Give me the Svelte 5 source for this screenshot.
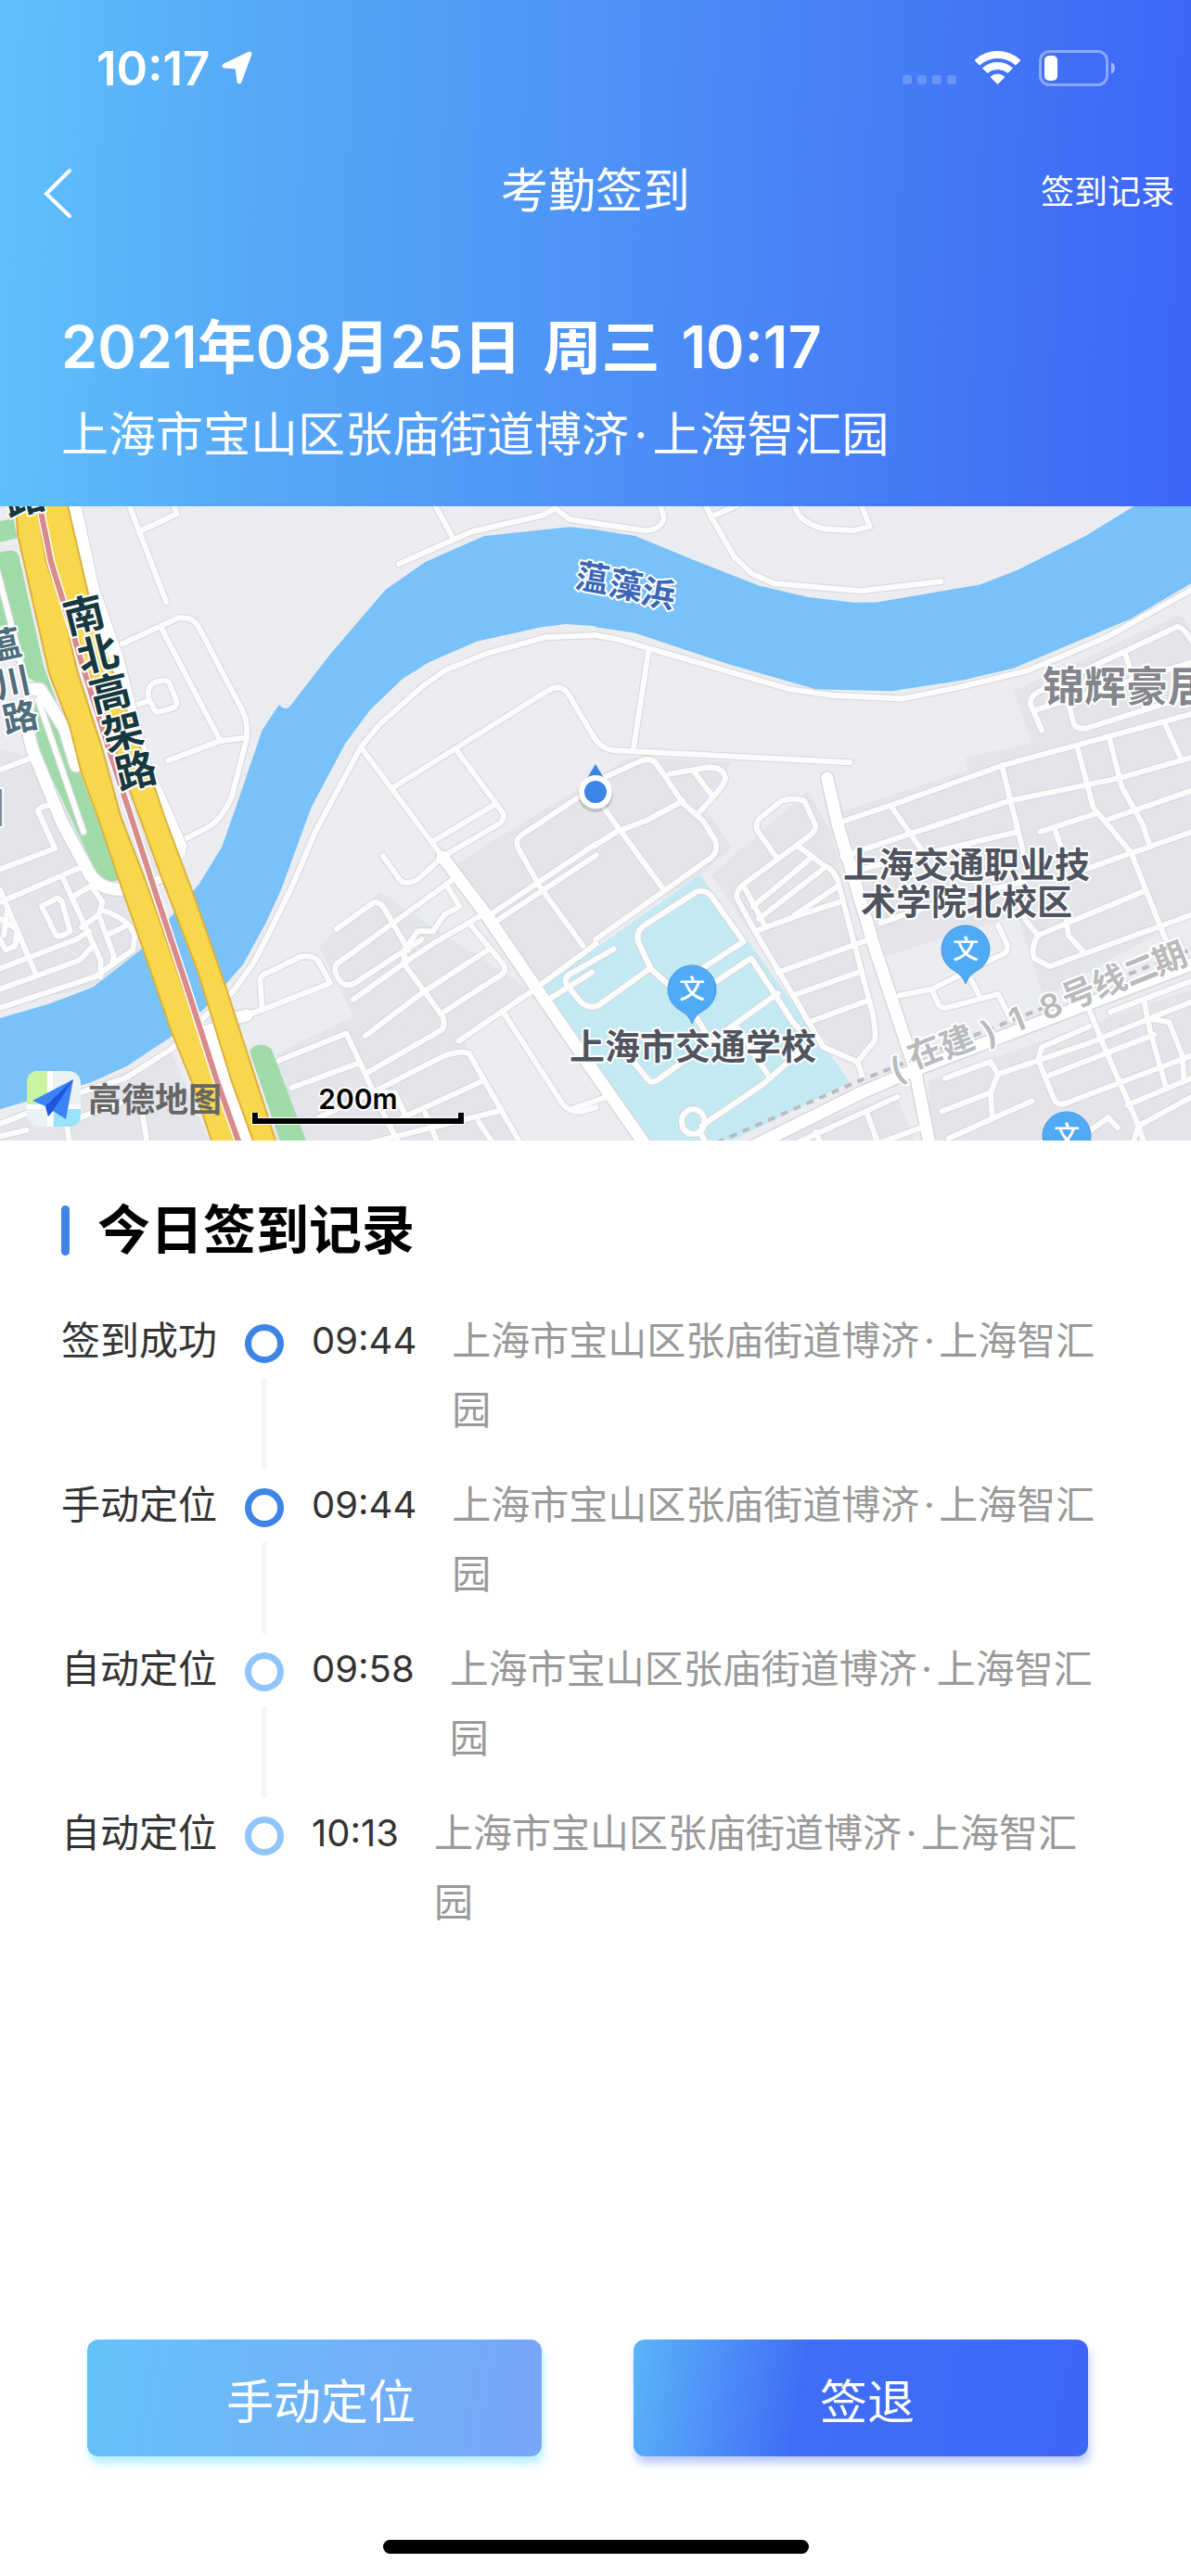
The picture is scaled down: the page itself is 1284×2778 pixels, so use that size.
<svelte:head>
    <title>考勤签到</title>
</svelte:head>

<script>
 const address = { street: '上海市宝山区张庙街道博济', building: '上海智汇园' };

 const records = [
     { label: '签到成功', time: '09:44', auto: false },
     { label: '手动定位', time: '09:44', auto: false },
     { label: '自动定位', time: '09:58', auto: true },
     { label: '自动定位', time: '10:13', auto: true },
 ];

 const pins = [
     { x: 1041, y: 477 },
     { x: 746, y: 520 },
     { x: 1150, y: 678 },
 ];

 // the map is stored as two square tiles, 1568 units wide each
 const westStreets = [
     'M340 10L438 245M370 73L465 32L458 10',
     'M300 355L470 283Q505 280 520 300L640 510Q655 540 648 580L610 715Q585 770 545 790L485 818',
     'M425 308L580 580M442 628L580 580L648 572',
     'M355 495L393 483M393 483Q380 440 425 435Q445 430 450 450L465 485Q468 500 445 503L420 510Q405 510 402 495Z',
     'M1050 153L1240 75L1430 35L1462 18L1500 45L1570 55M1145 10L1190 85',
     'M1570 325L1435 330L1285 368L1175 408L1110 450L1000 540L950 595L830 800L770 930L700 1060L665 1120L610 1190L540 1245L450 1325L330 1395L210 1430L0 1505',
     'M0 1225L250 1150L350 1085L355 1050Q340 1010 270 990',
     'M950 595L1165 860L1280 1000',
     'M1040 690L1440 460Q1475 440 1495 465L1570 580',
     'M1200 600L1325 755Q1330 770 1315 780L1165 860L1100 915Q1060 935 1045 905L1008 858M1145 820L1300 735',
     'M1525 715L1370 810Q1355 820 1365 840L1420 930L1535 1075',
     'M1290 1000L1570 828M1300 1020L1570 856',
     'M1200 910L1035 1020L885 1120Q875 1140 900 1165Q915 1175 935 1165L1110 1060',
     'M885 1035L985 970Q1005 970 1015 990L1075 1085M930 1205L1075 1110L1140 1070L1280 995',
     'M1180 935L1210 980L1170 1000L1140 1040L1100 1040L1065 1085L1065 1120L1165 1245Q1175 1270 1160 1280L970 1380',
     'M962 1292L1110 1190L1285 1085M1235 1020L1325 1120Q1335 1135 1320 1145L1160 1240',
     'M1208 1305L1400 1185L1570 1070M1325 1235L1480 1455Q1500 1480 1530 1475L1570 1465',
     'M735 1352L912 1287L1020 1500L1060 1568M768 1418L940 1360',
     'M980 1430L1150 1350Q1200 1325 1235 1335L1275 1400L1380 1568',
     'M840 1490L980 1430L1040 1430L1070 1490M1060 1490L1275 1400M900 1568L1310 1475M1260 1500L1310 1568M1120 1480L1160 1568',
     'M690 1225L685 1160Q685 1145 705 1140L790 1102Q825 1095 840 1115L870 1165L690 1230L620 1250',
     'M0 650L85 620M0 890L145 840L100 750Q100 740 130 735M0 970L215 885',
     'M165 910L265 1110L265 1150M0 1130L200 1060L235 1040M0 1180L210 1110L240 1080',
     'M110 980L150 960Q165 965 165 975L185 1040Q150 1060 145 1045ZM0 940L95 1145',
     'M195 955L240 930L270 970L260 1000L215 1030M260 1000L300 1100L295 1120M280 1050L335 1025',
     'M0 1010L45 1035L40 1075L15 1085L0 1060M20 985L10 1050',
     'M180 1500L330 1450M175 1500L185 1568M375 1480L390 1568M0 1535L70 1520',
     'M-10 160L50 370L75 500M100 480L220 800',
 ];

 const eastStreets = [
     'M0 55L130 72Q175 70 180 40L170 10',
     'M290 10L305 40L365 135L410 175L470 200L700 218L910 195M305 38L370 13',
     'M525 10Q530 50 600 68L680 72L722 62L700 10',
     'M0 325L60 335L510 455L620 470L810 478L960 450L1140 410L1345 330L1570 215',
     'M140 360L100 600M-5 570Q15 600 50 603L670 632',
     'M20 670L120 628Q145 620 160 635L230 730L285 775L315 820Q325 850 300 865L0 1060',
     'M195 660L290 645Q335 640 342 670Q340 690 270 755M260 655L305 710',
     'M-5 835L55 800L140 770L230 725M20 740L180 940',
     'M475 860L425 795Q420 775 435 765L490 725Q520 715 550 725L580 785Q580 800 555 815L385 930Q365 950 375 965L420 1040L530 1210L600 1320L690 1355L735 1305Q740 1290 730 1240L640 925Q630 890 600 880L535 835',
     'M390 930L445 1025M415 980L565 865M430 1010L605 885M525 1000L640 930M420 1040L540 1000L640 970',
     'M480 1140L720 1060M520 1195L690 1140M560 1260L710 1210M690 1355L705 1400',
     'M650 775L780 735L1070 640L1350 570L1570 515M650 860L860 795L1090 725L1380 670L1570 620',
     'M700 890L1110 800M780 740L860 845M1070 640L1140 900',
     'M1270 600L1310 740L1410 850L1510 1080M1355 580L1385 690L1440 780L1458 830M1500 540L1540 620',
     'M1350 770L1570 700M1170 800L1320 755M1210 795L1235 860M1290 890L1570 800',
     'M1175 555L1145 490Q1145 470 1170 460L1530 305Q1545 300 1570 340M1160 505L1570 390',
     'M1245 490L1260 540Q1270 552 1290 550L1570 470M1395 370L1415 430',
     'M750 1020L940 960L1130 920M1130 1010L1165 1050L1440 945',
     'M1165 1050Q1145 1080 1155 1105L1195 1125L1570 1000M1240 1010L1245 1050L1285 1090',
     'M1060 1025L1085 1075Q1085 1095 1060 1100L885 1180L800 1195M985 1150L1010 1195',
     'M885 1180L905 1220Q915 1228 935 1222L1060 1192L1095 1255',
     'M920 1395L1040 1355L1060 1385L1040 1430L1045 1490M912 1475L1040 1430M1060 1385L1300 1310L1570 1210',
     'M1300 1270L1175 1320L1165 1350L1205 1440Q1215 1465 1240 1455L1570 1340M1190 1390L1470 1290',
     'M1300 1230L1340 1320L1430 1510L1450 1568M930 1540L1150 1450M1355 1235L1570 1160',
     'M1445 1210L1460 1280L1500 1410M1455 1250L1510 1260L1545 1340L1550 1400',
     'M1570 1440L1430 1510L1410 1568M1290 1530L1350 1490L1375 1515M1400 1460L1570 1395',
     'M490 1568L795 1440M715 1480L750 1568M580 1525L600 1568M700 1568L870 1510',
     'M48 1083L-70 1145Q-90 1160 -66 1180L-37 1213Q-9 1230 11 1217L142 1131M-9 1139L-119 1202',
     'M230 1200L146 1131L113 1067Q105 1040 130 1025L265 945Q290 938 305 955L390 1065L280 1130',
     'M260 1240L300 1300M320 1160L410 1105L520 1260L560 1300',
     'M60 1310L140 1400Q150 1410 170 1395L480 1190M375 1275L460 1395M280 1510L440 1410L540 1330',
     'M227 1500A30 30 0 1 1 287 1500A30 30 0 1 1 227 1500M275 1525L300 1568M-65 1470L30 1440',
 ];

 const westAvenues = [
     'M58 500L85 600L163 777L237 903Q270 945 330 938L420 910',
     'M80 455L105 455L170 550L200 640',
     'M620 1250L650 1243',
 ];

 const eastAvenues = [
     'M610 670L640 790L735 1080L840 1370L885 1580',
     'M370 1580L700 1430L840 1375L1570 1120',
     'M-403 860L-288 1000L-128 1215L0 1385L140 1568',
 ];
</script>

{#snippet place()}{address.street}<span class="dot">·</span>{address.building}{/snippet}

<main>
    <header>
        <div class="status">
            <div class="clock">
                <span>10:17</span>
                <svg width="34" height="36" viewBox="0 0 34 36" aria-hidden="true">
                    <path d="M3 16L30 3L19 33L17 17Z" fill="#fff" stroke="#fff" stroke-width="5" stroke-linejoin="round" />
                </svg>
            </div>
            <div class="signals">
                <div class="dots"><i></i><i></i><i></i><i></i></div>
                <svg width="51" height="38" viewBox="0 0 51 38" aria-hidden="true">
                    <g fill="#fff" stroke="#fff" stroke-linejoin="round">
                        <path d="M1 11A36 36 0 0 1 50 11L45 16A29 29 0 0 0 6 16Z" />
                        <path d="M9.500 19.500A24 24 0 0 1 41.500 19.500L36.500 24.500A17 17 0 0 0 14.500 24.500Z" />
                        <path d="M18 29A11 11 0 0 1 33 29L25.500 36.500Z" />
                    </g>
                </svg>
                <svg width="83" height="39" viewBox="0 0 83 39" aria-hidden="true">
                    <rect x="1.500" y="1.500" width="72" height="36" rx="10" fill="none" stroke="#fff" stroke-opacity=".4" stroke-width="3" />
                    <rect x="6" y="6" width="14" height="27" rx="5" fill="#fff" />
                    <path d="M78 13Q82 15 82 19.500Q82 24 78 26Z" fill="#fff" fill-opacity=".5" />
                </svg>
            </div>
        </div>

        <nav>
            <button class="back" type="button" aria-label="返回">
                <svg width="34" height="60" viewBox="0 0 34 60" aria-hidden="true">
                    <path d="M30 8L5 33L30 57" fill="none" stroke="#fff" stroke-width="4" stroke-linecap="round" />
                </svg>
            </button>
            <h1>考勤签到</h1>
            <a class="history" href="#records">签到记录</a>
        </nav>

        <div class="now">
            <p class="date"><span>2021年08月25日</span> <span>周三</span> <span>10:17</span></p>
            <p class="place">{@render place()}</p>
        </div>
    </header>

    <svg class="map" viewBox="0 0 1284 684" role="img" aria-label="高德地图">
        <rect width="1284" height="684" fill="#ebecf0" />

        <g transform="translate(0 -6) scale(.40944 .44643)">
            <g fill="#e3e5ea">
                <path d="M1205 875L1568 670V1060L1410 1170Z" />
                <path d="M840 1075L1000 945L1400 1185L1210 1300L930 1245Z" />
                <path d="M730 1335L930 1245L1220 1300L1380 1568H720Z" />
                <path d="M0 600L85 620L320 940L370 1085L245 1175L0 1220ZM0 1510L450 1330L560 1568H0Z" />
            </g>
            <g fill="#9edba8">
                <path d="M0 50L35 42L45 90L0 100ZM0 125Q45 112 50 135L115 400L175 550L100 440L60 420L0 300Z" />
                <path d="M80 560L95 480L180 580L220 680L318 915Q275 930 250 890Z" />
                <path d="M657 1330Q680 1300 715 1325L815 1568H745Z" />
            </g>
        </g>
        <g transform="translate(642 -6) scale(.40944 .44643)">
            <g fill="#e3e5ea">
                <path d="M0 670L90 620L360 630L290 745L360 838L275 903L0 1060Z" />
                <path d="M305 905L560 700L620 800L750 1290L690 1370L640 1350Z" />
                <path d="M650 750L980 650L975 620L1150 585L1100 460L1540 275L1568 310V1568H880V1400L1568 1180V1000L1180 1200L1110 1000L765 1100Z" />
                <path d="M400 1568L790 1430L850 1568Z" />
            </g>
            <path d="M-143 1175L275 903L670 1405L310 1568H155Z" fill="#c3e9f2" />
        </g>

        <g transform="translate(0 -6) scale(.40944 .44643)" fill="#79c1f9">
            <path d="M1570 70L1500 63L1275 85L1120 148L1015 215L870 370L765 495Q750 510 735 492L690 555L640 690L585 835L525 925L440 1015L370 1085L245 1175L130 1215L0 1250V1470L240 1405L335 1365L450 1295L540 1225L640 1120L700 1020L740 940L820 740L910 585L975 505L1060 430L1130 390L1255 340L1425 305L1490 298L1570 303Z" />
            <path transform="translate(1568)" d="M0 70L105 85L250 140L430 205L560 233L680 246L740 245L1010 203L1110 168L1290 85L1420 12H1568V200L1410 285L1100 405L970 433L780 460L580 455L350 395L105 320L0 305Z" />
        </g>

        {#each ['casing', 'surface'] as layer}
            <g class="street {layer}">
                <g transform="translate(0 -6) scale(.40944 .44643)">
                    {#each westStreets as d}
                        <path {d} />
                    {/each}
                    {#each westAvenues as d}
                        <path class="avenue" {d} />
                    {/each}
                </g>
                <g transform="translate(642 -6) scale(.40944 .44643)">
                    {#each eastStreets as d}
                        <path {d} />
                    {/each}
                    {#each eastAvenues as d}
                        <path class="avenue" {d} />
                    {/each}
                </g>
            </g>
        {/each}

        <g class="highway">
            <path class="verge" d="M60 -5L87 -5L107 87L133 161L163 277L197 354L202 366L200 377L190 388L150 300Z" />
            <path class="verge" d="M216 561L231 556L280 690H256Z" />
            <path class="gap" d="M42 0L58 61L72 107L93 177L120 261L146 334L167 400" />
            <path class="lane" d="M17 -5L19 30L37 110L53 180L75 237L88 288L105 334L133 417L153 474L185 567L208 624L230 690H255L230 617L207 547L177 461L157 404L130 334L110 261L83 177L67 107L50 61L39 -5Z" />
            <path class="lane" d="M46 -5L50 27L67 94L83 144L113 227L140 307L150 334L173 397L213 501L250 621L275 690H299L242 514L208 417L177 334L167 304L140 230L115 160L95 94L72 -5Z" />
            <path class="rail-edge" d="M42 -5L55 60L68 102L93 185L120 270L141 334L170 424L200 514L233 617L259 690" />
            <path class="rail" d="M42 -5L55 60L68 102L93 185L120 270L141 334L170 424L200 514L233 617L259 690" />
        </g>

        <path class="metro" d="M773 686L923 621L1284 478" />

        <g class="label">
            <text x="9" y="11" rotate="-14" font-size="44" fill="#17383d">路</text>
            <text x="73 88 101 115 129" y="138 180 222 264 306" rotate="-14" font-size="44" fill="#17383d">南北高架路</text>
            <text x="-12 -2 6" y="167 207 245" rotate="-12" font-size="38" fill="#4f6d7c">蕰川路</text>
            <text x="-39" y="341" font-size="44" fill="#85868c">园</text>
            <text x="619 655 690" y="87 95 104" rotate="10" font-size="36" fill="#3a66b8">蕰藻浜</text>
            <text x="1124" y="211" font-size="45" fill="#85868c">锦辉豪居</text>
            <text x="1042" y="400" font-size="38" text-anchor="middle" fill="#50545f">上海交通职业技</text>
            <text x="1042" y="440" font-size="38" text-anchor="middle" fill="#50545f">术学院北校区</text>
            <text x="747" y="596" font-size="38" text-anchor="middle" fill="#50545f">上海市交通学校</text>
            <text x="966 985 1020 1065 1094 1127 1151 1184 1218 1249" y="622 607 596 582 568 555 544 531 518 506" rotate="-22" font-size="36" fill="#b9babc">(在建)18号线二期</text>
        </g>

        {#each pins as pin}
            <g transform="translate({pin.x} {pin.y})">
                <path d="M0 38Q-3 29 -12 24A26 26 0 1 1 12 24Q3 29 0 38Z" fill="#50abf6" stroke="#4799e0" stroke-width="1" />
                <text class="pin" y="11" text-anchor="middle">文</text>
            </g>
        {/each}

        <g transform="translate(642 308)">
            <circle cy="3" r="19" fill="#000" opacity=".15" />
            <path d="M0 -30L9 -15H-9Z" fill="#3c84e6" />
            <circle r="18" fill="#fff" />
            <circle r="12" fill="#3c84e6" />
        </g>

        <g transform="translate(29 609)">
            <rect width="58" height="60" rx="13" fill="#ebf2f3" />
            <path d="M22 0V36H0V13Q0 0 13 0Z" fill="#c9f5a0" />
            <path d="M29 41H58V47Q58 60 45 60H29Z" fill="#9ae2fd" />
            <path d="M22 0H28V60H22ZM0 36H58V41H0Z" fill="#fff" />
            <path d="M50 9L6 32L20 38L23 49L28 43L42 52Z" fill="#3a82f7" />
            <path d="M50 9L20 38L23 49L28 43Z" fill="#1e55dc" />
        </g>
        <text class="brand" x="95" y="653">高德地图</text>

        <text class="scale" x="386" y="650" text-anchor="middle">200m</text>
        <path d="M275 654V663H497V654" fill="none" stroke="#fff" stroke-width="8" />
        <path d="M275 654V663H497V654" fill="none" stroke="#000" stroke-width="6" />
    </svg>

    <section id="records">
        <h2>今日签到记录</h2>
        <ol>
            {#each records as record}
                <li>
                    <span class="type">{record.label}</span>
                    <span class="node" class:auto={record.auto}></span>
                    <time>{record.time}</time>
                    <p>{@render place()}</p>
                </li>
            {/each}
        </ol>
    </section>

    <footer>
        <div class="actions">
            <button class="locate" type="button">手动定位</button>
            <button class="leave" type="button">签退</button>
        </div>
        <div class="home"></div>
    </footer>
</main>

<style>
 :global(body) {
     margin: 0;
     background-color: #fff;
 }

 main {
     display: flex;
     flex-direction: column;
     min-height: 100vh;
     overflow: hidden;
     font-family: Inter, 'Noto Sans CJK SC', sans-serif;
     color: #333;
 }

 h1, h2, p, ol {
     margin: 0;
     padding: 0;
     font-weight: 400;
 }

 button {
     border: none;
     font-family: inherit;
     color: #fff;
     cursor: pointer;
 }

 header {
     background: linear-gradient(92deg, #5fc1fb 0%, #57aaf8 20%, #4f97f7 45%, #447cf6 75%, #3d65f7 100%);
     color: #fff;
 }

 .status {
     display: flex;
     justify-content: space-between;
     align-items: center;
     height: 146px;
     box-sizing: border-box;
     padding: 0 81px 0 104px;
 }

 .clock {
     display: flex;
     align-items: center;
     gap: 13px;
     font-size: 51px;
     font-weight: 600;
 }

 .signals {
     display: flex;
     align-items: center;
     gap: 19px;
 }

 .dots {
     display: flex;
     gap: 6px;
     align-self: flex-end;
     padding-bottom: 2px;
 }

 .dots i {
     width: 10px;
     height: 10px;
     border-radius: 3px;
     background-color: rgba(255, 255, 255, 0.2);
 }

 nav {
     display: grid;
     grid-template-columns: 1fr auto 1fr;
     align-items: center;
     height: 120px;
     padding: 0 18px 0 45px;
 }

 .back {
     justify-self: start;
     padding: 0;
     background: none;
     line-height: 0;
 }

 h1 {
     margin-left: -27px;
     font-size: 51px;
     line-height: 72px;
 }

 .history {
     justify-self: end;
     padding-bottom: 4px;
     font-size: 36px;
     color: #fff;
     text-decoration: none;
 }

 .now {
     padding: 60px 66px 41px;
 }

 .date {
     display: flex;
     gap: 23px;
     font-size: 63px;
     font-weight: 600;
     line-height: 96px;
     margin-bottom: 11px;
 }

 .place {
     font-size: 51px;
     line-height: 72px;
 }

 .dot {
     display: inline-block;
     width: 0.5em;
     text-align: center;
 }

 .map {
     display: block;
     width: 100%;
     height: auto;
 }

 .street path {
     fill: none;
     stroke-linecap: round;
     stroke-linejoin: round;
     vector-effect: non-scaling-stroke;
 }

 .casing path {
     stroke: #d5d7db;
     stroke-width: 8px;
 }

 .surface path {
     stroke: #fcfcfd;
     stroke-width: 6px;
 }

 .casing .avenue {
     stroke-width: 16px;
 }

 .surface .avenue {
     stroke: #fff;
     stroke-width: 13px;
 }

 .verge {
     fill: #fff;
     stroke: #d5d7db;
     stroke-width: 1px;
 }

 .gap {
     fill: none;
     stroke: #e6e8ec;
     stroke-width: 20px;
 }

 .lane {
     fill: #f7d74b;
     stroke: #dcb03c;
     stroke-width: 2px;
 }

 .rail-edge {
     fill: none;
     stroke: #fff;
     stroke-width: 9px;
 }

 .rail {
     fill: none;
     stroke: #d98a8a;
     stroke-width: 6px;
 }

 .metro {
     fill: none;
     stroke: #bbbcbf;
     stroke-width: 4px;
     stroke-dasharray: 8 7;
 }

 .label text {
     font-weight: 600;
     stroke: #fff;
     stroke-width: 4px;
     stroke-linejoin: round;
     paint-order: stroke;
 }

 .pin {
     font-size: 28px;
     font-weight: 500;
     fill: #fff;
 }

 .brand {
     font-size: 36px;
     font-weight: 700;
     fill: #666;
 }

 .scale {
     font-size: 30px;
     font-weight: 600;
     fill: #000;
     stroke: #fff;
     stroke-width: 4px;
     paint-order: stroke;
 }

 section {
     padding: 57px 66px 0;
 }

 h2 {
     display: flex;
     align-items: center;
     gap: 30px;
     margin-bottom: 41px;
     font-size: 57px;
     font-weight: 700;
     line-height: 80px;
     color: #000;
 }

 h2::before {
     content: '';
     width: 9px;
     height: 54px;
     border-radius: 5px;
     background-color: #3c84e6;
 }

 ol {
     list-style: none;
 }

 li {
     display: flex;
     font-size: 42px;
     line-height: 75px;
 }

 .type {
     flex: none;
 }

 .node {
     display: flex;
     flex-direction: column;
     align-items: center;
     flex: none;
     width: 42px;
     margin: 20px 30px 0;
 }

 .node::before {
     content: '';
     box-sizing: border-box;
     width: 42px;
     height: 42px;
     border: 7px solid #3c84e6;
     border-radius: 50%;
 }

 .node.auto::before {
     border-color: #8fc5fb;
 }

 .node::after {
     content: '';
     flex: 1;
     width: 6px;
     margin-top: 16px;
     border-radius: 3px;
     background-color: #f5f5f5;
 }

 li:last-child .node::after {
     display: none;
 }

 time {
     flex: none;
     font-size: 40px;
 }

 li p {
     max-width: 700px;
     margin-left: 38px;
     padding-bottom: 27px;
     color: #999;
 }

 footer {
     margin-top: auto;
     padding: 60px 0 24px;
 }

 .actions {
     display: flex;
     gap: 99px;
     padding: 0 111px 90px 94px;
 }

 .actions button {
     flex: 1;
     height: 126px;
     padding: 2px 0 0 14px;
     border-radius: 12px;
     font-size: 51px;
 }

 .locate {
     background: linear-gradient(100deg, #66c2f9, #79a5f7);
     box-shadow: 2px 8px 10px rgba(120, 225, 255, 0.5);
 }

 .leave {
     background: linear-gradient(100deg, #5cb4f9, #3f6ef6 37%, #3d66f7);
     box-shadow: 2px 8px 10px rgba(70, 110, 247, 0.35);
 }

 .home {
     width: 459px;
     height: 15px;
     margin: 0 auto;
     border-radius: 8px;
     background-color: #000;
 }
</style>
